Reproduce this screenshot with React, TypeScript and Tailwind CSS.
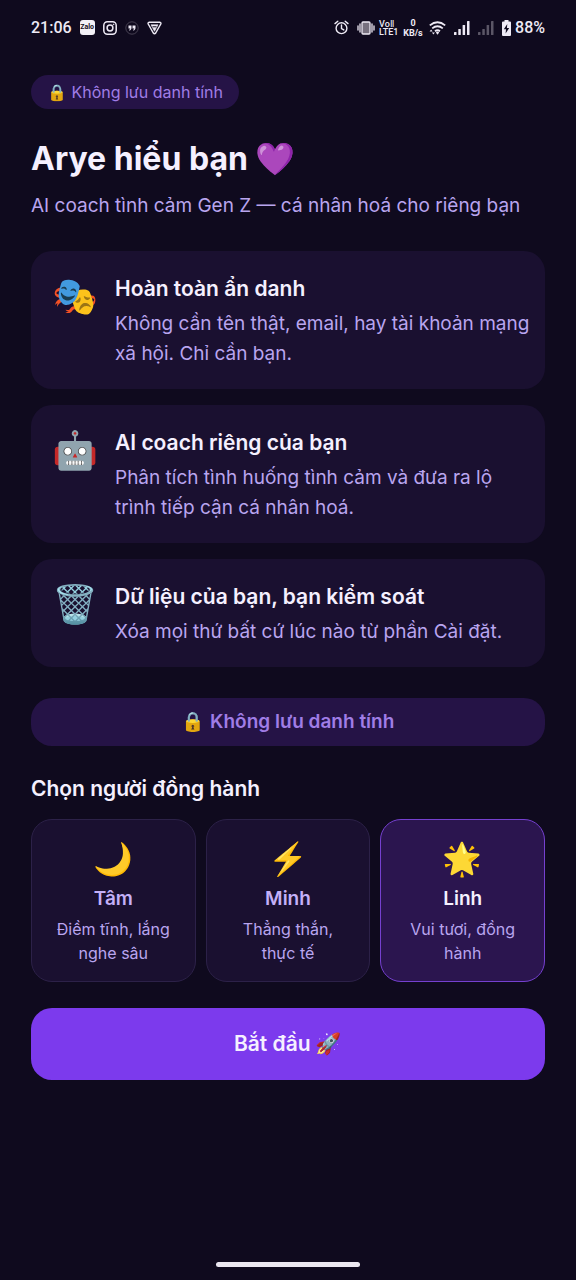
import { useState } from "react"
import { clsx } from "clsx"

const features = [
    {
        icon: "🎭",
        title: "Hoàn toàn ẩn danh",
        body: "Không cần tên thật, email, hay tài khoản mạng xã hội. Chỉ cần bạn.",
    },
    {
        icon: "🤖",
        title: "AI coach riêng của bạn",
        body: "Phân tích tình huống tình cảm và đưa ra lộ trình tiếp cận cá nhân hoá.",
    },
    {
        icon: "🗑️",
        title: "Dữ liệu của bạn, bạn kiểm soát",
        body: "Xóa mọi thứ bất cứ lúc nào từ phần Cài đặt.",
    },
]

const companions = [
    { id: "tam", icon: "🌙", name: "Tâm", trait: "Điềm tĩnh, lắng nghe sâu" },
    { id: "minh", icon: "⚡", name: "Minh", trait: "Thẳng thắn, thực tế" },
    { id: "linh", icon: "🌟", name: "Linh", trait: "Vui tươi, đồng hành" },
]

const SignalBars = ({ className }: { className?: string }) => (
    <svg viewBox="0 0 16 14" className={clsx("h-[14px] w-4", className)} fill="currentColor">
        <rect x="0" y="11" width="2.5" height="3" rx=".5" />
        <rect x="4.3" y="8" width="2.5" height="6" rx=".5" />
        <rect x="8.6" y="4" width="2.5" height="10" rx=".5" />
        <rect x="13" y="0" width="2.5" height="14" rx=".5" />
    </svg>
)

const StatusBar = () => (
    <div className="flex h-[55px] items-center justify-between px-[31px] font-[Roboto,sans-serif] text-base font-medium text-[#eeeaf5]">
        <div className="flex items-center gap-2">
            <span>21:06</span>
            <span className="flex h-[15px] w-[15px] items-center justify-center rounded-[3px] bg-[#f2f0f6] text-[7px] font-bold text-[#130c20]">Zalo</span>
            <svg viewBox="0 0 14 14" className="h-[14px] w-[14px]" fill="none" stroke="currentColor" strokeWidth="1.5">
                <rect x=".8" y=".8" width="12.4" height="12.4" rx="3.6" />
                <circle cx="7" cy="7" r="2.9" />
                <circle cx="10.6" cy="3.4" r=".5" fill="currentColor" strokeWidth=".6" />
            </svg>
            <svg viewBox="0 0 14 14" className="h-[14px] w-[14px]" fill="none">
                <circle cx="7" cy="7" r="6.2" stroke="#554f60" strokeWidth=".8" />
                <path d="M3.5 4.5h3v2.300c0 1.500-.7 2.400-2.200 2.900v-1.100c.7-.3.9-.7.9-1.200H3.500ZM7.500 4.500h3v2.300c0 1.500-.7 2.400-2.200 2.900v-1.100c.7-.3.9-.7.9-1.200H7.500Z" fill="currentColor" />
            </svg>
            <svg viewBox="0 0 15 14" className="h-[14px] w-[15px]" fill="none" stroke="currentColor" strokeLinejoin="round">
                <path d="M2.2 1.2h10.6q1.5.4 1 1.8L8.7 12q-1.2 1.5-2.4 0L1.2 3q-.5-1.4 1-1.8Z" strokeWidth="1.5" />
                <path d="M4 3.800h7L7.500 10.300Z" fill="currentColor" strokeWidth=".6" />
                <path d="M5.500 5.800h4" stroke="#0f0a1e" strokeWidth="1" />
            </svg>
        </div>
        <div className="flex items-center">
            <svg viewBox="0 0 15 15" className="h-[15px] w-[15px]" fill="none" stroke="currentColor" strokeWidth="1.4" strokeLinecap="round">
                <circle cx="7.5" cy="8.2" r="5.4" />
                <path d="M1 3.6 3.8 1.2M14 3.6l-2.8-2.4M7.5 5v3.5l2.3 1.4" />
            </svg>
            <svg viewBox="0 0 18 14" className="ml-2 h-[14px] w-[18px]" fill="none" stroke="currentColor" strokeWidth="1.3" strokeLinecap="round">
                <rect x="5" y="1" width="8" height="12" rx="1" fill="#77717f" />
                <path d="M3 3v8M15 3v8M1 5v4M17 5v4" />
            </svg>
            <span className="ml-1 flex w-[18px] flex-col text-[9px] leading-[8px] font-medium">
                <span>VoⅡ</span>
                <span>LTE1</span>
            </span>
            <span className="ml-1 flex w-6 flex-col items-center text-[9px] leading-[10px] font-bold">
                <span>0</span>
                <span>KB/s</span>
            </span>
            <svg viewBox="0 0 17 14" className="ml-1 h-[14px] w-[17px]" fill="none" stroke="currentColor" strokeWidth="1.8">
                <path d="M.8 4.400Q8.500-1.800 16.200 4.400M3.200 7.400q5.300-4.200 10.600 0M6 10.200q2.500-2 5 0" />
                <path d="m6.800 11.600 1.700-1 1.700 1-1.700 2.200Z" fill="currentColor" stroke="none" />
                <path d="m.6 10.400 1.500-1.800 1.500 1.800ZM2.900 11.400h3l-1.500 2Z" fill="currentColor" stroke="none" />
            </svg>
            <SignalBars className="ml-2" />
            <SignalBars className="ml-2 text-[#5b5666]" />
            <svg viewBox="0 0 9 16" className="ml-2 h-4 w-[9px]">
                <path d="M2.5 0h4v1.5H8q1 0 1 1V15q0 1-1 1H1q-1 0-1-1V2.500q0-1 1-1h1.500Z" fill="currentColor" />
                <path d="M5.300 4 1.800 9.300h2.200L3.600 13.500l3.600-5.600H4.900Z" fill="#0f0a1e" />
            </svg>
            <span className="ml-1">88%</span>
        </div>
    </div>
)

export default function App() {
    const [companion, setCompanion] = useState("linh")

    return (
        <div className="flex min-h-screen flex-col bg-[#0f0a1e] font-[Inter,'Noto_Color_Emoji',sans-serif] text-[#f5f0ff]">
            <StatusBar />

            <main className="flex flex-1 flex-col px-[31px] pt-5">
                <p className="self-start rounded-full bg-[#251346] px-4 py-[5px] text-base leading-6 text-[#a07de6]">
                    🔒 Không lưu danh tính
                </p>
                <h1 className="mt-7 text-[32px] leading-11 font-bold">Arye hiểu bạn 💜</h1>
                <p className="mt-[10px] text-[19px] leading-[30px] text-[#b9a5ef]">
                    AI coach tình cảm Gen Z — cá nhân hoá cho riêng bạn
                </p>

                <div className="mt-[30px] flex flex-col gap-4">
                    {features.map((feature) => (
                        <section key={feature.title} className="flex gap-4 rounded-[21px] bg-[#1a1030] py-5 pr-2 pl-5">
                            <span className="w-12 shrink-0 text-center text-[37px] leading-[50px]">{feature.icon}</span>
                            <div>
                                <h2 className="text-[21px] leading-9 font-semibold">{feature.title}</h2>
                                <p className="mt-0.5 text-[19px] leading-[30px] text-[#b9a5ef]">{feature.body}</p>
                            </div>
                        </section>
                    ))}
                </div>

                <p className="mt-[31px] rounded-[21px] bg-[#251346] py-3 text-center text-[19px] leading-6 font-semibold text-[#a07de6]">
                    🔒 Không lưu danh tính
                </p>

                <fieldset className="mt-7">
                    <legend className="text-[21px] leading-[30px] font-semibold">Chọn người đồng hành</legend>
                    <div className="mt-[15px] grid grid-cols-3 gap-[10px]">
                        {companions.map(({ id, icon, name, trait }) => (
                            <label
                                key={id}
                                className={clsx(
                                    "relative flex cursor-pointer flex-col items-center rounded-[21px] border px-5 py-4 text-center",
                                    companion === id ? "border-[#7540cf] bg-[#2b154f]" : "border-[#2c2148] bg-[#1a1030]"
                                )}
                            >
                                <input
                                    type="radio"
                                    name="companion"
                                    value={id}
                                    checked={companion === id}
                                    onChange={() => setCompanion(id)}
                                    className="sr-only"
                                />
                                <span className="text-[32px] leading-[46px]">{icon}</span>
                                <span className={clsx("text-[19px] leading-[34px] font-semibold", companion !== id && "text-[#c4b0f8]")}>
                                    {name}
                                </span>
                                <span className="mt-px text-base leading-6 text-[#b9a5ef]">{trait}</span>
                            </label>
                        ))}
                    </div>
                </fieldset>

                <button type="button" className="mt-[26px] rounded-[21px] bg-[#7c3aed] py-5 text-[21px] leading-8 font-semibold">
                    Bắt đầu 🚀
                </button>
            </main>

            <div className="mx-auto mb-[13px] h-[5px] w-1/4 rounded-full bg-[#ebe7f0]" />
        </div>
    )
}
